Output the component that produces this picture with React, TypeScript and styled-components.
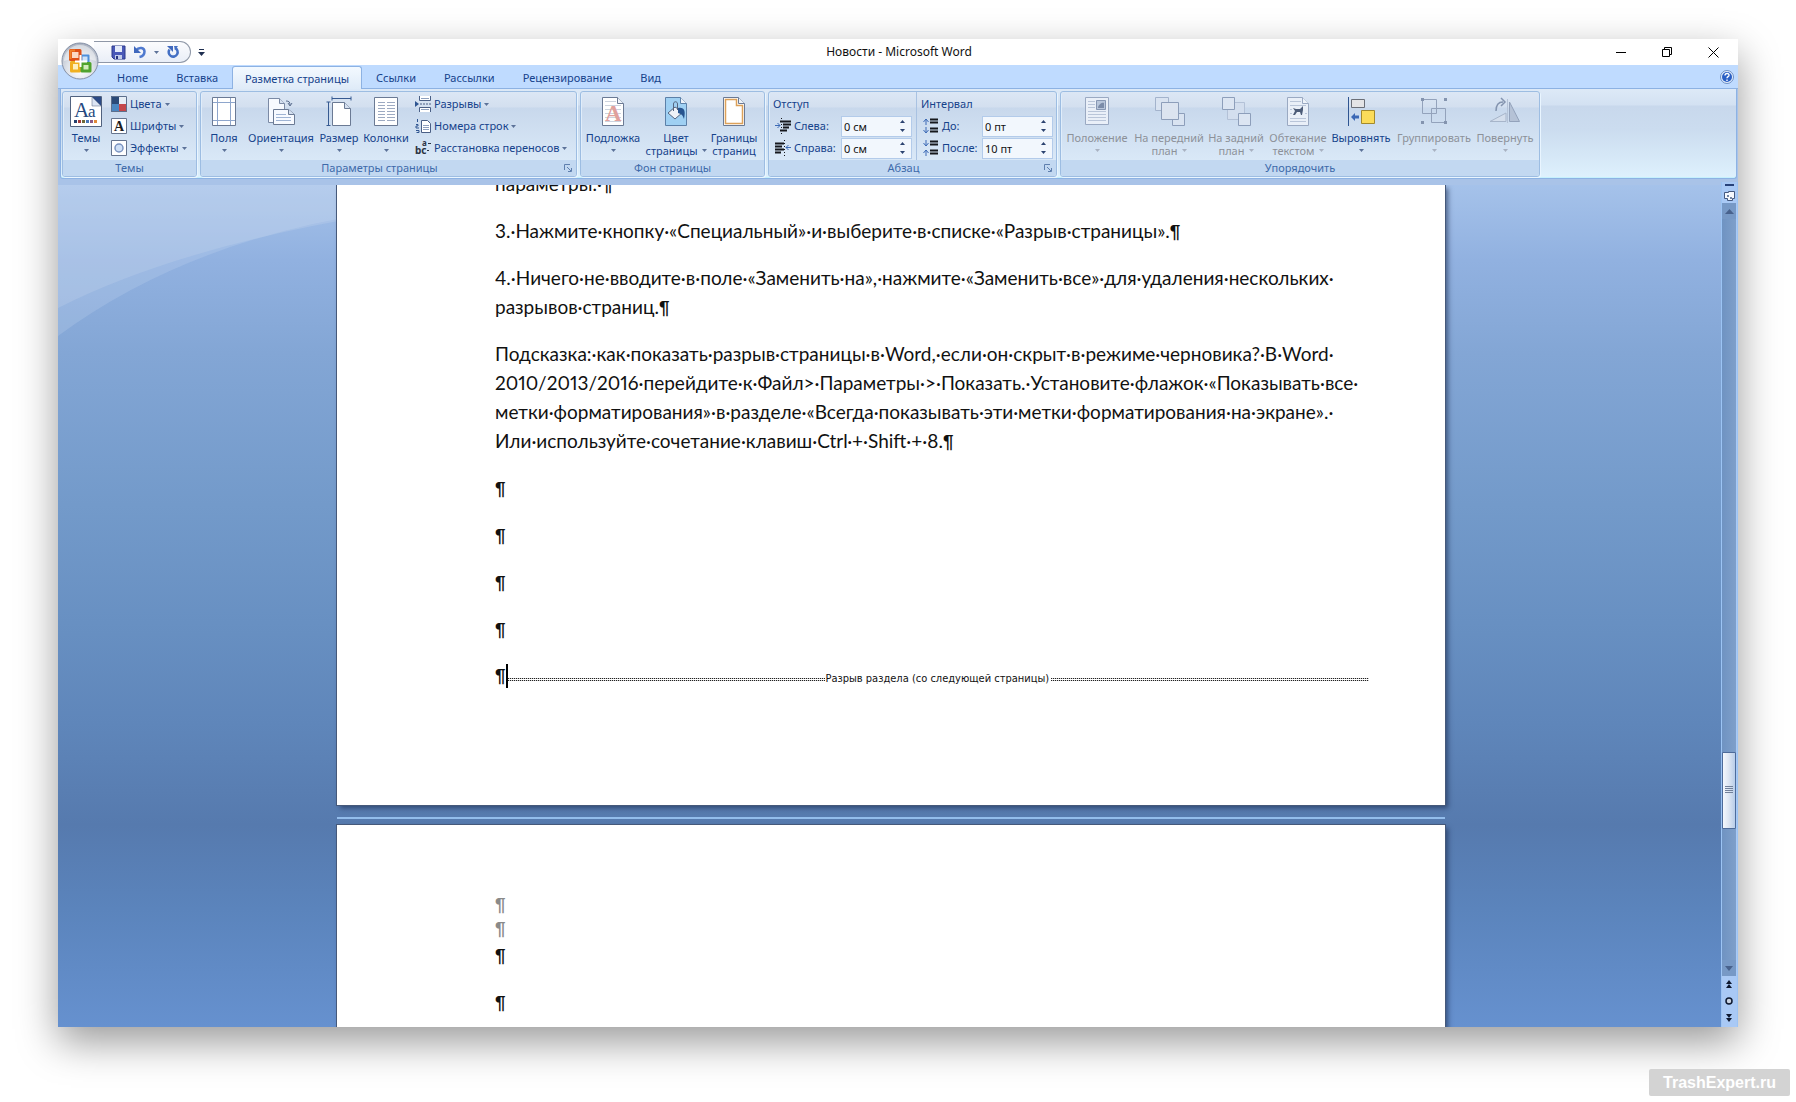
import React from "react";
import styled, { createGlobalStyle, css } from "styled-components";

const ui = `"Noto Sans", "Open Sans", sans-serif`;
const navy = "#15428b";

const Global = createGlobalStyle`
  * { box-sizing: border-box; }
  body { margin: 0; background: #fff; font-family: ${ui}; overflow: hidden; }
  button { font: inherit; color: inherit; background: none; border: 0; padding: 0; margin: 0; cursor: default; }
  svg { display: block; flex: none; }
`;

const Desktop = styled.div`
  position: relative;
  display: flex;
  min-height: 100vh;
  padding: 39px 58px 75px;
`;

const Window = styled.div`
  position: relative;
  flex: 1;
  min-width: 0;
  height: calc(100vh - 114px);
  display: flex;
  flex-direction: column;
  background: #a9c3e8;
  box-shadow: 0 15px 38px rgba(0, 0, 0, 0.4);
`;

/* Title bar */

const TitleBar = styled.header`
  display: grid;
  grid-template-columns: 1fr auto 1fr;
  align-items: center;
  height: 26px;
  flex: none;
  padding-left: 2px;
  background: #fff;
`;

const Title = styled.h1`
  margin: 0;
  font-size: 12px;
  line-height: 16px;
  font-weight: 400;
  color: #111;
`;

const QuickArea = styled.div`
  display: flex;
  align-items: center;
  gap: 7px;
  padding-left: 34px;
`;

const QuickBar = styled.div`
  display: flex;
  align-items: center;
  gap: 7px;
  width: 97px;
  height: 22px;
  padding-left: 17px;
  border: 1px solid #8f98a8;
  border-left: 0;
  border-radius: 0 11px 11px 0;
  background: linear-gradient(#fbfcfe, #e9eef7);
`;

const WindowButtons = styled.div`
  display: flex;
  justify-content: flex-end;
  padding-right: 2px;
`;

const WindowButton = styled.button`
  display: flex;
  align-items: center;
  justify-content: center;
  width: 46px;
  height: 26px;
`;

const Orb = styled.button`
  position: absolute;
  z-index: 2;
  left: 3px;
  top: 3px;
  width: 38px;
  height: 38px;
`;

/* Tabs */

const TabBar = styled.nav`
  display: flex;
  align-items: flex-end;
  flex: none;
  height: 24px;
  padding-left: 45px;
  padding-right: 4px;
  background: #bfdbff;
  border-bottom: 1px solid #8db2e3;
`;

const Tab = styled.button<{ $active?: boolean }>`
  height: 23px;
  padding: 2px 14px 0;
  font-size: 11px;
  line-height: 20px;
  color: ${navy};
  ${(p) =>
    p.$active &&
    css`
      padding: 1px 12px 0;
      margin-bottom: -1px;
      border: 1px solid #8db2e3;
      border-bottom: 0;
      border-radius: 3px 3px 0 0;
      background: linear-gradient(#f3f9ff, #dfebf8);
    `}
`;

const HelpButton = styled.button`
  margin-left: auto;
  align-self: center;
`;

/* Ribbon */

const Ribbon = styled.div`
  display: flex;
  flex: none;
  gap: 3px;
  margin: 0 1px 0 2px;
  padding: 2px 1px 1px;
  border: 1px solid #8db2e3;
  border-top: 0;
  border-radius: 0 0 3px 3px;
  background: linear-gradient(#dde9f7 0, #d3e1f2 16px, #c8d8ec 17px, #cbdcef 40px, #def1fd 100%);
  box-shadow: inset 0 -1px #c5f1fd;
`;

const Group = styled.section<{ $width: number }>`
  display: flex;
  flex-direction: column;
  width: ${(p) => p.$width}px;
  flex: none;
  border: 1px solid #9dbde2;
  border-radius: 3px;
  box-shadow: 1px 1px #e9f5ff, inset 1px 0 #e0edfa;
  overflow: hidden;
  background: linear-gradient(#dce7f5 0, #d3dfef 15px, #c8d8ec 16px, #d9e8f7 68px);
`;

const GroupBody = styled.div`
  display: flex;
  height: 68px;
`;

const GroupFooter = styled.footer`
  display: flex;
  align-items: center;
  height: 16px;
  background: #c2d8f1;
  color: #3e6aaa;
  font-size: 11px;
  line-height: 16px;
`;

const GroupTitle = styled.h2`
  flex: 1;
  margin: 0;
  font: inherit;
  text-align: center;
`;

const Launcher = styled.button`
  padding: 0 4px 0 6px;
`;

const BigButton = styled.button<{ $width: number }>`
  display: flex;
  flex-direction: column;
  align-items: center;
  justify-content: flex-start;
  width: ${(p) => p.$width}px;
  flex: none;
  padding-top: 4px;
  color: ${navy};
  font-size: 11px;
  line-height: 13px;
  white-space: nowrap;
  &:disabled {
    color: #8d9199;
  }
`;

const BigLabel = styled.span`
  margin-top: 3px;
`;

const SecondLine = styled.span`
  display: flex;
  align-items: center;
  justify-content: center;
  gap: 4px;
  height: 13px;
`;

const Stack = styled.div<{ $indent: number }>`
  display: flex;
  flex-direction: column;
  padding: 1px 0 0 ${(p) => p.$indent}px;
`;

const SmallButton = styled.button`
  display: flex;
  align-items: center;
  gap: 3px;
  height: 22px;
  color: ${navy};
  font-size: 11px;
  line-height: 16px;
  white-space: nowrap;
`;

const Fields = styled.fieldset<{ $label: number }>`
  display: grid;
  grid-template-columns: 16px ${(p) => p.$label}px 71px;
  grid-auto-rows: 22px;
  align-items: center;
  column-gap: 3px;
  margin: 0;
  padding: 1px 4px 0 6px;
  border: 0;
  color: ${navy};
  font-size: 11px;
  line-height: 16px;
  & + & {
    border-left: 1px solid #a9c2e2;
  }
`;

const FieldsTitle = styled.span`
  grid-column: 1 / -1;
  margin-left: -2px;
`;

const SpinBox = styled.div`
  display: flex;
  height: 21px;
  border: 1px solid #b3cbea;
  background: #f2f7fd;
`;

const SpinInput = styled.input`
  flex: 1;
  min-width: 0;
  padding: 0 0 0 2px;
  border: 0;
  background: none;
  color: #111;
  font: 11px ${ui};
`;

const SpinArrows = styled.div`
  display: grid;
  width: 17px;
  button {
    display: flex;
    align-items: center;
    justify-content: center;
  }
`;

/* Document */

const Workspace = styled.div`
  display: flex;
  flex: 1;
  min-height: 0;
  margin-top: 6px;
`;

const Canvas = styled.main`
  position: relative;
  display: flex;
  flex-direction: column;
  align-items: center;
  flex: 1;
  min-width: 0;
  padding-left: 3px;
  overflow: hidden;
  background: linear-gradient(
    #a5c2ea 0%, #91b1e0 9%, #83a6d5 20%, #739aca 38%, #6890c2 52%,
    #5f86ba 64%, #567aae 76%, #5b84bc 86%, #6691cf 100%
  );
`;

const Swoosh = styled.svg`
  position: absolute;
  left: 0;
  top: 0;
`;

const Sheet = styled.article<{ $second?: boolean }>`
  position: relative;
  flex: none;
  width: calc(100% - 552px);
  padding: 0 76px 97px 158px;
  background: #fff;
  box-shadow: 0 0 0 1px #46597a, 3px 3px 5px rgba(20, 35, 70, 0.6);
  color: #111;
  font-family: Lato, "Open Sans", sans-serif;
  font-size: 19px;
  font-variant-numeric: proportional-nums;
  line-height: 29px;
  white-space: nowrap;
  ${(p) => p.$second && css`padding-top: 67px;`}
`;

const Scrolled = styled.div`
  margin-top: -16px;
`;

const Clip = styled.div`
  overflow: hidden;
`;

const PageGap = styled.div`
  position: relative;
  flex: none;
  width: calc(100% - 552px);
  height: 20px;
  padding-top: 12px;
  &::after {
    content: "";
    display: block;
    height: 2px;
    background: #93bdec;
  }
`;

const Para = styled.p`
  margin: 0 0 18px;
`;

const HeaderPara = styled.p`
  margin: 0;
  line-height: 24px;
  color: #8a8a8a;
`;

const Pilcrow = styled.span`
  font-family: "Liberation Sans", sans-serif;
  font-size: 19px;
  font-weight: 700;
  line-height: 1;
`;

const BreakRow = styled(Para)`
  display: flex;
  align-items: center;
  height: 29px;
`;

const Caret = styled.span`
  width: 2px;
  height: 24px;
  background: #000;
`;

const Dots = styled.span`
  flex: 1;
  height: 3px;
  margin-top: 8px;
  background:
    linear-gradient(#fff, #fff) 0 1px / 100% 1px no-repeat,
    repeating-linear-gradient(90deg, #222 0 1px, #ccc 1px 2px);
`;

const BreakLabel = styled.span`
  margin: 6px 2px 0 0;
  font-family: "DejaVu Sans Condensed", "DejaVu Sans", sans-serif;
  font-size: 11px;
  line-height: 14px;
`;

/* Scroll bar */

const ScrollColumn = styled.div`
  display: flex;
  flex-direction: column;
  width: 17px;
  flex: none;
  margin-top: -3px;
  padding-right: 1px;
  border-left: 1px solid #9cc4f4;
  border-right: 1px solid #9cc4f4;
  background: #a9c9f5;
`;

const ScrollButton = styled.button<{ $height: number; $dark?: boolean }>`
  display: flex;
  align-items: center;
  justify-content: center;
  height: ${(p) => p.$height}px;
  flex: none;
  background: ${(p) => (p.$dark ? "#7799c6" : "none")};
`;

const Track = styled.div`
  display: flex;
  flex-direction: column;
  flex: 1;
  background: linear-gradient(90deg, #6f93c2, #7e9fca);
`;

const Before = styled.div`
  flex: 536;
`;
const After = styled.div`
  flex: 132;
`;

const Thumb = styled.div`
  display: flex;
  align-items: center;
  justify-content: center;
  height: 77px;
  border: 1px solid #4d6b9a;
  border-radius: 1px;
  background: linear-gradient(90deg, #f4f8fd, #dfe7f3 45%, #b8cde9);
`;

const Watermark = styled.div`
  position: absolute;
  right: 6px;
  bottom: 6px;
  padding: 0 14px;
  border-radius: 2px;
  background: #d3d3d3;
  color: #fff;
  font: bold 16px/27px "Liberation Sans", Arial, sans-serif;
`;

/* Icons */

const Arrow = ({ up = false, color = "#5c7299" }: { up?: boolean; color?: string }) => (
  <svg width="5" height="3" viewBox="0 0 5 3">
    <path d={up ? "M0 3h5L2.500 0z" : "M0 0h5L2.500 3z"} fill={color} />
  </svg>
);

const OfficeLogo = () => (
  <svg width="38" height="38" viewBox="0 0 38 38">
    <defs>
      <radialGradient id="orb" cx="50%" cy="75%" r="75%">
        <stop offset="0" stopColor="#fff" />
        <stop offset="0.500" stopColor="#dde1e8" />
        <stop offset="1" stopColor="#a9b1c0" />
      </radialGradient>
    </defs>
    <circle cx="19" cy="19" r="18" fill="url(#orb)" stroke="#8590a6" />
    <path d="M3 19a16 16 0 0 1 32 0q-16-6-32 0z" fill="#fff" opacity="0.450" />
    <g fill="none" strokeLinejoin="round">
      <path d="M20.500 13.500h7v8h-7z" fill="#cfe3f8" stroke="#4d8fdb" strokeWidth="2" />
      <path d="M9.500 8.500h9.500v9H9.500z" fill="#fbd9c4" stroke="#de4f17" strokeWidth="3" />
      <path d="M9.500 17V8.500H14" stroke="#f0822a" strokeWidth="2" />
      <path d="M10.500 20.500h8v8.500h-8z" fill="#fdf0bd" stroke="#f0b01f" strokeWidth="3" />
      <path d="M21 21.500h8V29h-8z" fill="#d3ecbd" stroke="#4fa32d" strokeWidth="3" />
    </g>
    <path d="M19.500 13v12M14 19.500h12" stroke="#fff" strokeWidth="2" />
  </svg>
);

const SaveIcon = () => (
  <svg width="15" height="15" viewBox="0 0 15 15">
    <path d="M1 1h13v13H3l-2-2z" fill="#4a59b8" stroke="#2d3a8c" />
    <path d="M4 1h7v6H4z" fill="#e4ebfa" />
    <path d="M4 10h7v4H4z" fill="#c3cdea" />
    <path d="M5 11h2v3H5z" fill="#27347f" />
  </svg>
);

const UndoIcon = () => (
  <svg width="14" height="14" viewBox="0 0 14 14">
    <path d="M3 5.500c3-4 8.500-3 8.500 1 0 3-2 5-5 5.500" fill="none" stroke="#4e79cf" strokeWidth="2.500" />
    <path d="M1 1v7h7z" fill="#3f68bd" />
  </svg>
);

const RedoIcon = () => (
  <svg width="14" height="14" viewBox="0 0 14 14">
    <path d="M3.500 4.500a4.500 4.500 0 1 0 5.500-1.500" fill="none" stroke="#4470c4" strokeWidth="2.500" />
    <path d="M1 1h6v6z" fill="#3f68bd" />
    <path d="M8 1h4l-3 4z" fill="#4470c4" />
  </svg>
);

const CustomizeIcon = () => (
  <svg width="7" height="7" viewBox="0 0 7 7">
    <path d="M1 0h5v1H1zM0 3h7L3.500 7z" fill="#1f2f50" />
  </svg>
);

const HelpIcon = () => (
  <svg width="14" height="14" viewBox="0 0 14 14">
    <circle cx="7" cy="7" r="6.500" fill="#e4effc" stroke="#6d8fc4" />
    <circle cx="7" cy="7" r="5" fill="#2a5fc4" />
    <path d="M5 5.500c0-3 4.500-2.500 4 0-.3 1.200-2 1.200-2 2.700M7 9.500v1.500" stroke="#fff" strokeWidth="1.400" fill="none" />
  </svg>
);

const ThemesIcon = () => (
  <svg width="32" height="32" viewBox="0 0 32 32">
    <path d="M.5.5h31v30H.5z" fill="#fff" stroke="#51627f" />
    <path d="M22 1h9v9z" fill="#2b4a86" />
    <path d="M22 1v9h9z" fill="#dbe4f3" stroke="#51627f" strokeWidth="0.500" />
    <text x="4" y="21" fontFamily="Liberation Serif" fontSize="21" fill="#25497f">A</text>
    <text x="18" y="21" fontFamily="Liberation Serif" fontSize="17" fill="#25497f">a</text>
    <path d="M4 24h3v3H4z" fill="#26416f" />
    <path d="M8 24h3v3H8z" fill="#a33b3b" />
    <path d="M12 24h3v3h-3z" fill="#6f6a3a" />
    <path d="M16 24h3v3h-3z" fill="#4a77b8" />
    <path d="M20 24h3v3h-3z" fill="#8c5a86" />
    <path d="M24 24h3v3h-3z" fill="#e08a3a" />
  </svg>
);

const ColorsIcon = () => (
  <svg width="16" height="16" viewBox="0 0 16 16">
    <path d="M0 0h8v8H0z" fill="#2b4a78" />
    <path d="M8 0h8v8H8z" fill="#e6eef6" />
    <path d="M0 8h8v8H0z" fill="#4b86c0" />
    <path d="M8 8h8v8H8z" fill="#c4474a" />
    <path d="M.5.5h15v15H.5z" fill="none" stroke="#5d6f8c" />
  </svg>
);

const FontsIcon = () => (
  <svg width="16" height="16" viewBox="0 0 16 16">
    <path d="M.5.5h15v15H.5z" fill="#fff" stroke="#66758f" />
    <text x="3" y="13" fontFamily="Liberation Serif" fontSize="14" fontWeight="bold" fill="#1c1c1c">A</text>
  </svg>
);

const EffectsIcon = () => (
  <svg width="16" height="16" viewBox="0 0 16 16">
    <path d="M.5.5h15v15H.5z" fill="#fff" stroke="#66758f" />
    <circle cx="8" cy="8" r="4" fill="#cfe0f6" stroke="#7a93c0" strokeWidth="1.500" />
  </svg>
);

const MarginsIcon = () => (
  <svg width="32" height="32" viewBox="0 0 32 32">
    <path d="M4.500 1.500h23v28h-23z" fill="#fff" stroke="#6b7a94" />
    <path d="M9.500 2v27M22.500 2v27M5 6.500h22M5 24.500h22" stroke="#8ea6cc" />
  </svg>
);

const OrientationIcon = () => (
  <svg width="32" height="32" viewBox="0 0 32 32">
    <path d="M3.500 2.500h11l5 5v19h-16z" fill="#f7faff" stroke="#7b8aa5" />
    <path d="M14.500 2.500v5h5" fill="#d5e0f0" stroke="#7b8aa5" />
    <path d="M21 5c3 0 4 1 4 4M23 7l2 3 2-3" fill="none" stroke="#5a6d8e" />
    <path d="M8.500 13.500h15l6 5v10h-21z" fill="#f7faff" stroke="#6b7a94" />
    <path d="M23.500 13.500v5h6" fill="#d5e0f0" stroke="#6b7a94" />
    <path d="M11 18.500h10M11 21.500h15M11 24.500h15" stroke="#9fb4d4" />
  </svg>
);

const SizeIcon = () => (
  <svg width="32" height="32" viewBox="0 0 32 32">
    <path d="M9.500 6.500h12l6 6v17h-18z" fill="#fff" stroke="#6b7a94" />
    <path d="M21.500 6.500v6h6" fill="#d5e0f0" stroke="#6b7a94" />
    <path d="M9 2.500h19M9 .5v4M28 .5v4M5.500 6v23M3.500 6h4M3.500 29.500h4" stroke="#375a91" />
  </svg>
);

const ColumnsIcon = () => (
  <svg width="32" height="32" viewBox="0 0 32 32">
    <path d="M4.500 1.500h23v28h-23z" fill="#fff" stroke="#6b7a94" />
    <path d="M8 6.500h7M17 6.500h8M8 9.500h7M17 9.500h8M8 12.500h7M17 12.500h8M8 15.500h7M17 15.500h8M8 18.500h7M17 18.500h8M8 21.500h7M17 21.500h8M8 24.500h7M17 24.500h8" stroke="#9daac2" />
  </svg>
);

const BreaksIcon = () => (
  <svg width="16" height="16" viewBox="0 0 16 16">
    <path d="M4.500 0v4.500h11V0M4.500 16v-4.500h11V16" fill="#fff" stroke="#4a5f85" />
    <path d="M6 2.500h8M6 13.500h8" stroke="#8ea0bf" />
    <path d="M0 5l4 3-4 3z" fill="#2f5591" />
    <path d="M5 8h11" stroke="#4a5f85" strokeDasharray="2 1" />
  </svg>
);

const LineNumbersIcon = () => (
  <svg width="16" height="16" viewBox="0 0 16 16">
    <path d="M6.500 2.500h6l3 3v9h-9z" fill="#fff" stroke="#4a5f85" />
    <path d="M8 7.500h6M8 9.500h6M8 11.500h6" stroke="#8ea0bf" />
    <path d="M2.500 1v3M1 6.500h2v1.500H1v2h3M1 12.500h3v2H1.500" fill="none" stroke="#2f5591" />
  </svg>
);

const HyphenIcon = () => (
  <svg width="16" height="16" viewBox="0 0 16 16">
    <text x="0" y="14" fontFamily="Noto Sans" fontSize="10" fontWeight="bold" fill="#2c3443">bc</text>
    <text x="7" y="6" fontFamily="Noto Sans" fontSize="8" fontWeight="bold" fill="#2c3443">a</text>
    <path d="M13 3.500h3M12 10.500h2" stroke="#2c3443" />
  </svg>
);

const PageShape = ({ fill = "#fff", stroke = "#6b7a94" }: { fill?: string; stroke?: string }) => (
  <>
    <path d="M5.500 1.500h15l6 6v22h-21z" fill={fill} stroke={stroke} />
    <path d="M20.500 1.500v6h6" fill="#eef3fa" stroke={stroke} />
  </>
);

const WatermarkIcon = () => (
  <svg width="32" height="32" viewBox="0 0 32 32">
    <PageShape />
    <path d="M8 5.500h11M8 9.500h16M8 13.500h16M8 17.500h16M8 21.500h16M8 25.500h16" stroke="#ccd3de" />
    <text x="8" y="25" fontFamily="Liberation Serif" fontSize="23" fontWeight="bold" fill="#e0a09c">A</text>
  </svg>
);

const PageColorIcon = () => (
  <svg width="32" height="32" viewBox="0 0 32 32">
    <PageShape fill="#9fd0f3" stroke="#5c80a8" />
    <path d="M8 17l7-6 8 5-8 7z" fill="#eef2f7" stroke="#55657f" />
    <path d="M13.500 15V8c0-3 4-3 4 0v6" fill="none" stroke="#55657f" />
    <path d="M18 12c6-1 8 2 6 11-1-3-2-5-6-6z" fill="#27548f" />
  </svg>
);

const BordersIcon = () => (
  <svg width="32" height="32" viewBox="0 0 32 32">
    <PageShape />
    <path d="M7.500 3.500h11v6h6v18h-17z" fill="none" stroke="#dca15a" strokeWidth="1.500" />
  </svg>
);

const IndentIcon = ({ right = false }: { right?: boolean }) => (
  <svg width="16" height="16" viewBox="0 0 16 16">
    <path
      d={right ? "M0 3.500h9M0 6.500h7M0 9.500h9M0 12.500h6" : "M5 3.500h11M8 6.500h8M8 9.500h6M5 12.500h7"}
      stroke="#16181d"
      strokeWidth="2"
    />
    <path d={right ? "M16 7.500h-5M13.500 5L11 7.500l2.500 2.500" : "M0 7.500h5M2.500 5L5 7.500 2.500 10"} fill="none" stroke="#3b69b5" />
    <path d={right ? "M9.500 0v16" : "M6.500 0v16"} stroke="#16181d" strokeDasharray="1 2" />
  </svg>
);

const SpacingIcon = ({ after = false }: { after?: boolean }) => (
  <svg width="16" height="16" viewBox="0 0 16 16">
    <path d="M7 1.500h8M7 4.500h8M7 10.500h8M7 13.500h8" stroke="#16181d" strokeWidth="2" />
    <path
      d={after ? "M3 0v6M.5 3L3 6l2.500-3M3 16v-6M.5 13L3 10l2.500 3" : "M3 7V1M.5 4L3 1l2.500 3M3 9v6M.5 12L3 15l2.500-3"}
      fill="none"
      stroke="#3b69b5"
    />
  </svg>
);

const PositionIcon = () => (
  <svg width="32" height="32" viewBox="0 0 32 32">
    <path d="M4.500 1.500h23v27h-23z" fill="#e9eff8" stroke="#9aa9c2" />
    <path d="M7 5.500h7M7 8.500h7M7 11.500h7M7 15.500h18M7 18.500h18M7 21.500h18M7 24.500h18" stroke="#b9c5d9" />
    <path d="M15.500 4.500h9v9h-9z" fill="#b8c6db" stroke="#8797b3" />
    <path d="M17 12c0-4 5-6 6-5v5z" fill="#7b8ca9" />
  </svg>
);

const FrontIcon = () => (
  <svg width="32" height="32" viewBox="0 0 32 32">
    <path d="M2.500 1.500h13v13h-13z" fill="#d9e3f1" stroke="#a3b3cc" />
    <path d="M19.500 17.500h12v12h-12z" fill="#d9e3f1" stroke="#8d9eba" />
    <path d="M8.500 6.500h17v17h-17z" fill="#dce4f0" stroke="#8d9eba" />
  </svg>
);

const BackIcon = () => (
  <svg width="32" height="32" viewBox="0 0 32 32">
    <path d="M7.500 6.500h17v17h-17z" fill="#d3deee" stroke="#b3c1d7" />
    <path d="M2.500 1.500h12v12h-12z" fill="#dce5f2" stroke="#8d9eba" />
    <path d="M18.500 17.500h12v12h-12z" fill="#dce5f2" stroke="#8d9eba" />
  </svg>
);

const WrapIcon = () => (
  <svg width="32" height="32" viewBox="0 0 32 32">
    <PageShape fill="#e9eff8" stroke="#9aa9c2" />
    <path d="M8 5.500h11M8 9.500h16M8 22.500h16M8 25.500h16M8 13.500h2M8 17.500h2M23 17.500h2" stroke="#b9c5d9" />
    <path d="M11 12l3 1h4l3-3v4l-1 5h-1l-1-3h-3l-2 3h-2l2-4z" fill="#4d5c78" />
  </svg>
);

const AlignIcon = () => (
  <svg width="32" height="32" viewBox="0 0 32 32">
    <path d="M3.500 1v29" stroke="#2f5591" />
    <path d="M6.500 3.500h13v8h-13z" fill="#e4e4e6" stroke="#6b6f78" />
    <path d="M16.500 14.500h13v13h-13z" fill="#fbdc5a" stroke="#a38a2c" />
    <path d="M6 21l4-4v2.500h4v3h-4V25z" fill="#3c68b5" />
  </svg>
);

const GroupIcon = () => (
  <svg width="32" height="32" viewBox="0 0 32 32">
    <path d="M4.500 3.500h14v14h-14zM13.500 12.500h14v14h-14z" fill="none" stroke="#93a2bb" />
    <path d="M3 2h3v3H3zM26 2h3v3h-3zM3 25h3v3H3zM26 25h3v3h-3z" fill="#8494af" />
  </svg>
);

const RotateIcon = () => (
  <svg width="32" height="32" viewBox="0 0 32 32">
    <path d="M1 25.500L17 17v8.500z" fill="#d4deec" stroke="#a7b5ca" />
    <path d="M20.500 6v19.500h10z" fill="#b5c2d6" stroke="#93a2bb" />
    <path d="M18.500 3v24" stroke="#b5c2d6" />
    <path d="M7 15c0-6 3-9 7-9M12 2l4 4-4 4" fill="none" stroke="#8494af" strokeWidth="1.500" />
  </svg>
);

const LauncherIcon = () => (
  <svg width="8" height="8" viewBox="0 0 8 8">
    <path d="M.5 6V.5H6M3 3l4 4M7.500 4v3.500H4" fill="none" stroke="#5f7fae" />
  </svg>
);

/* Parts */

type BigProps = { width: number; icon: React.ReactNode; label: string; second?: string; menu?: boolean; off?: boolean };

const Big = ({ width, icon, label, second, menu = true, off }: BigProps) => (
  <BigButton $width={width} disabled={off}>
    {icon}
    <BigLabel>{label}</BigLabel>
    <SecondLine>
      {second}
      {menu && <Arrow color={off ? "#a9b2c2" : "#5c7299"} />}
    </SecondLine>
  </BigButton>
);

const Small = ({ icon, label }: { icon: React.ReactNode; label: string }) => (
  <SmallButton>
    {icon}
    {label}
    <Arrow />
  </SmallButton>
);

const Spin = ({ id, icon, label, value }: { id: string; icon: React.ReactNode; label: string; value: string }) => (
  <>
    {icon}
    <label htmlFor={id}>{label}</label>
    <SpinBox>
      <SpinInput id={id} defaultValue={value} />
      <SpinArrows>
        <button aria-label="+"><Arrow up color="#2c4370" /></button>
        <button aria-label="−"><Arrow color="#2c4370" /></button>
      </SpinArrows>
    </SpinBox>
  </>
);

const Footer = ({ title, launcher }: { title: string; launcher?: boolean }) => (
  <GroupFooter>
    <GroupTitle>{title}</GroupTitle>
    {launcher && <Launcher aria-label={title}><LauncherIcon /></Launcher>}
  </GroupFooter>
);

const P = () => <Pilcrow>¶</Pilcrow>;

const tabs = ["Home", "Вставка", "Разметка страницы", "Ссылки", "Рассылки", "Рецензирование", "Вид"];

export default function App() {
  return (
    <Desktop>
      <Global />
      <Window>
        <TitleBar>
          <QuickArea>
            <QuickBar>
              <button aria-label="Сохранить"><SaveIcon /></button>
              <button aria-label="Отменить"><UndoIcon /></button>
              <button aria-label="Список отмены"><Arrow /></button>
              <button aria-label="Повторить"><RedoIcon /></button>
            </QuickBar>
            <button aria-label="Настройка панели"><CustomizeIcon /></button>
          </QuickArea>
          <Title>Новости - Microsoft Word</Title>
          <WindowButtons>
            <WindowButton aria-label="Свернуть">
              <svg width="10" height="10" viewBox="0 0 10 10"><path d="M0 5.500h10" stroke="#000" /></svg>
            </WindowButton>
            <WindowButton aria-label="Восстановить">
              <svg width="10" height="10" viewBox="0 0 10 10">
                <path d="M.5 2.500h7v7h-7zM2.500 2V.5h7v7H8" fill="none" stroke="#000" />
              </svg>
            </WindowButton>
            <WindowButton aria-label="Закрыть">
              <svg width="11" height="11" viewBox="0 0 11 11"><path d="M.5.5l10 10M10.500.5l-10 10" stroke="#000" /></svg>
            </WindowButton>
          </WindowButtons>
        </TitleBar>
        <Orb aria-label="Office"><OfficeLogo /></Orb>

        <TabBar>
          {tabs.map((t) => (
            <Tab key={t} $active={t === "Разметка страницы"}>{t}</Tab>
          ))}
          <HelpButton aria-label="Справка"><HelpIcon /></HelpButton>
        </TabBar>

        <Ribbon>
          <Group $width={135}>
            <GroupBody>
              <Big width={46} icon={<ThemesIcon />} label="Темы" />
              <Stack $indent={2}>
                <Small icon={<ColorsIcon />} label="Цвета" />
                <Small icon={<FontsIcon />} label="Шрифты" />
                <Small icon={<EffectsIcon />} label="Эффекты" />
              </Stack>
            </GroupBody>
            <Footer title="Темы" />
          </Group>

          <Group $width={377}>
            <GroupBody>
              <Big width={46} icon={<MarginsIcon />} label="Поля" />
              <Big width={68} icon={<OrientationIcon />} label="Ориентация" />
              <Big width={48} icon={<SizeIcon />} label="Размер" />
              <Big width={46} icon={<ColumnsIcon />} label="Колонки" />
              <Stack $indent={6}>
                <Small icon={<BreaksIcon />} label="Разрывы" />
                <Small icon={<LineNumbersIcon />} label="Номера строк" />
                <Small icon={<HyphenIcon />} label="Расстановка переносов" />
              </Stack>
            </GroupBody>
            <Footer title="Параметры страницы" launcher />
          </Group>

          <Group $width={185}>
            <GroupBody>
              <Big width={64} icon={<WatermarkIcon />} label="Подложка" />
              <Big width={62} icon={<PageColorIcon />} label="Цвет" second="страницы" />
              <Big width={54} icon={<BordersIcon />} label="Границы" second="страниц" menu={false} />
            </GroupBody>
            <Footer title="Фон страницы" />
          </Group>

          <Group $width={289}>
            <GroupBody>
              <Fields $label={44}>
                <FieldsTitle>Отступ</FieldsTitle>
                <Spin id="indent-left" icon={<IndentIcon />} label="Слева:" value="0 см" />
                <Spin id="indent-right" icon={<IndentIcon right />} label="Справа:" value="0 см" />
              </Fields>
              <Fields $label={37}>
                <FieldsTitle>Интервал</FieldsTitle>
                <Spin id="space-before" icon={<SpacingIcon />} label="До:" value="0 пт" />
                <Spin id="space-after" icon={<SpacingIcon after />} label="После:" value="10 пт" />
              </Fields>
            </GroupBody>
            <Footer title="Абзац" launcher />
          </Group>

          <Group $width={480}>
            <GroupBody>
              <Big width={72} icon={<PositionIcon />} label="Положение" off />
              <Big width={72} icon={<FrontIcon />} label="На передний" second="план" off />
              <Big width={62} icon={<BackIcon />} label="На задний" second="план" off />
              <Big width={62} icon={<WrapIcon />} label="Обтекание" second="текстом" off />
              <Big width={64} icon={<AlignIcon />} label="Выровнять" />
              <Big width={82} icon={<GroupIcon />} label="Группировать" off />
              <Big width={60} icon={<RotateIcon />} label="Повернуть" off />
            </GroupBody>
            <Footer title="Упорядочить" />
          </Group>
        </Ribbon>

        <Workspace>
          <Canvas>
            <Swoosh width="320" height="160" viewBox="0 0 320 160">
              <path d="M0 0H320V29Q120 62 0 123z" fill="#d5e3f2" opacity="0.200" />
              <path d="M0 0H320V27Q130 55 0 151z" fill="#d0e0f4" opacity="0.200" />
            </Swoosh>
            <Sheet>
              <Clip>
                <Scrolled>
                  <Para>параметры.·<P /></Para>
                  <Para>3.·Нажмите·кнопку·«Специальный»·и·выберите·в·списке·«Разрыв·страницы».<P /></Para>
                  <Para>
                    4.·Ничего·не·вводите·в·поле·«Заменить·на»,·нажмите·«Заменить·все»·для·удаления·нескольких·
                    <br />
                    разрывов·страниц.<P />
                  </Para>
                  <Para>
                    Подсказка:·как·показать·разрыв·страницы·в·Word,·если·он·скрыт·в·режиме·черновика?·В·Word·
                    <br />
                    2010/2013/2016·перейдите·к·Файл&gt;·Параметры·&gt;·Показать.·Установите·флажок·«Показывать·все·
                    <br />
                    метки·форматирования»·в·разделе·«Всегда·показывать·эти·метки·форматирования·на·экране».·
                    <br />
                    Или·используйте·сочетание·клавиш·Ctrl·+·Shift·+·8.<P />
                  </Para>
                  <Para><P /></Para>
                  <Para><P /></Para>
                  <Para><P /></Para>
                  <Para><P /></Para>
                  <BreakRow as="div">
                    <P />
                    <Caret />
                    <Dots />
                    <BreakLabel>Разрыв раздела (со следующей страницы)</BreakLabel>
                    <Dots />
                  </BreakRow>
                </Scrolled>
              </Clip>
            </Sheet>
            <PageGap />
            <Sheet $second>
              <HeaderPara><P /></HeaderPara>
              <HeaderPara><P /></HeaderPara>
              <Para><P /></Para>
              <Para><P /></Para>
            </Sheet>
          </Canvas>

          <ScrollColumn>
            <ScrollButton $height={21} aria-label="Линейка">
              <svg width="12" height="19" viewBox="0 0 12 19">
                <path d="M2 1h9v2H2z" fill="#27427a" />
                <path d="M1.500 9.500h4v-1h6v7h-2v2h-5v-2h-3z" fill="#f5f8fd" stroke="#44597f" />
                <path d="M4 12h2v2H4zM7 14h2v2H7z" fill="#7386a6" />
              </svg>
            </ScrollButton>
            <ScrollButton $height={16} $dark aria-label="Вверх">
              <svg width="9" height="5" viewBox="0 0 9 5"><path d="M0 5h9L4.500 0z" fill="#48628d" /></svg>
            </ScrollButton>
            <Track>
              <Before />
              <Thumb>
                <svg width="8" height="8" viewBox="0 0 8 8">
                  <path d="M0 .5h8M0 2.500h8M0 4.500h8M0 6.500h8" stroke="#71809a" />
                </svg>
              </Thumb>
              <After />
            </Track>
            <ScrollButton $height={16} $dark aria-label="Вниз">
              <svg width="8" height="5" viewBox="0 0 8 5"><path d="M0 0h8L4 5z" fill="#48628d" /></svg>
            </ScrollButton>
            <ScrollButton $height={16} aria-label="Предыдущая страница">
              <svg width="6" height="8" viewBox="0 0 6 8"><path d="M0 4h6L3 0zM0 8h6L3 4z" fill="#0e1930" /></svg>
            </ScrollButton>
            <ScrollButton $height={17} aria-label="Выбор объекта перехода">
              <svg width="8" height="8" viewBox="0 0 8 8"><circle cx="4" cy="4" r="3" fill="#c9d3e2" stroke="#0e1930" strokeWidth="1.500" /></svg>
            </ScrollButton>
            <ScrollButton $height={18} aria-label="Следующая страница">
              <svg width="6" height="8" viewBox="0 0 6 8"><path d="M0 0h6L3 4zM0 4h6L3 8z" fill="#0e1930" /></svg>
            </ScrollButton>
          </ScrollColumn>
        </Workspace>
      </Window>
      <Watermark>TrashExpert.ru</Watermark>
    </Desktop>
  );
}
